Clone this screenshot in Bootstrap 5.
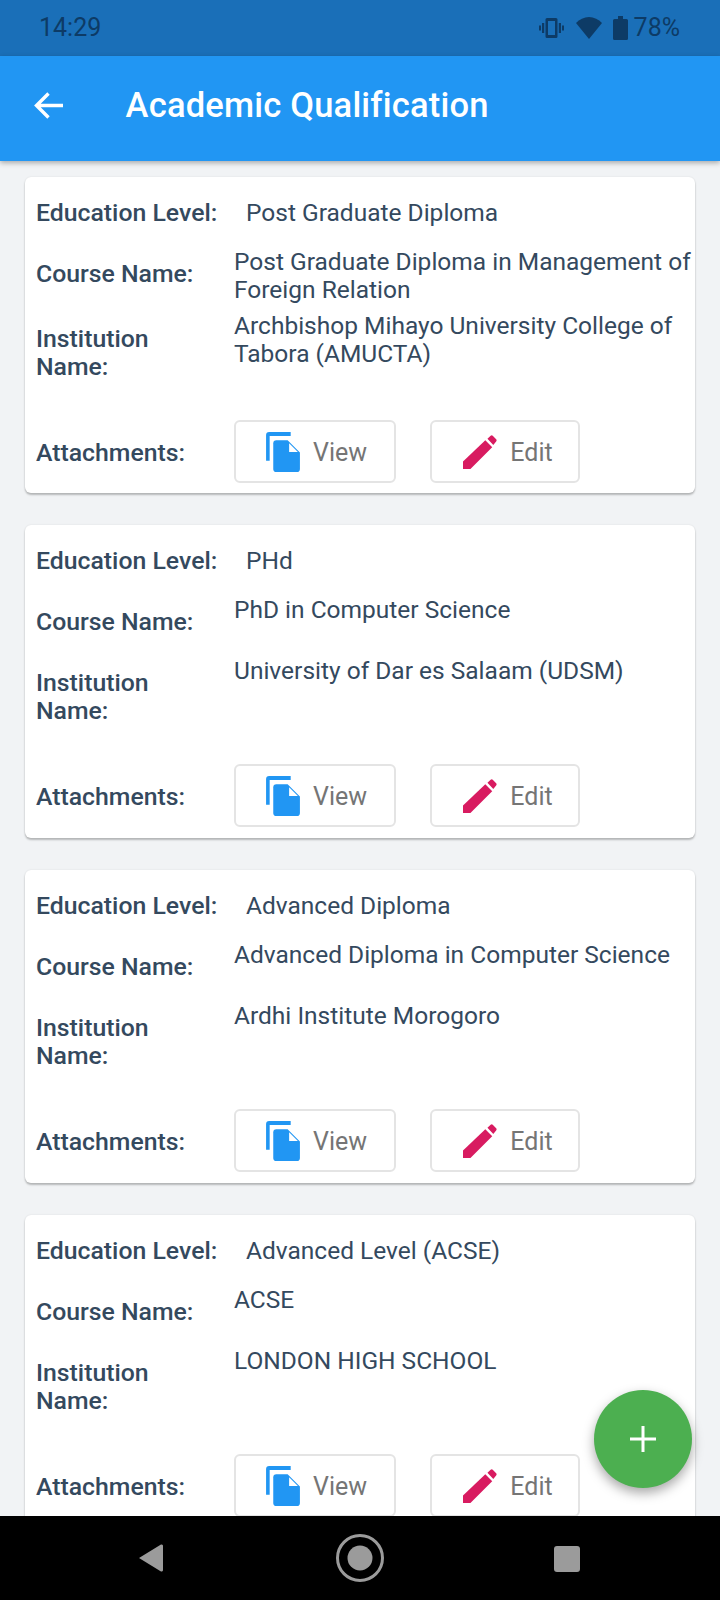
<!DOCTYPE html>
<html lang="en">
<head>
<meta charset="utf-8">
<link href="https://cdn.jsdelivr.net/npm/bootstrap@5.3.0/dist/css/bootstrap.min.css" rel="stylesheet">
<style>
html,body{margin:0;height:1600px;overflow:hidden;background:#f1f3f5;font-family:Roboto,"Liberation Sans",sans-serif;}
.shell{height:1600px;width:720px;}
.statusbar{height:56px;background:#1a6fb8;color:#0d3b66;font-size:25px;padding:0 40px 0 39px;}
.appbar{height:105px;background:#2196f3;color:#fff;box-shadow:0 2px 5px rgba(0,0,0,.3);z-index:2;padding-left:34px;padding-bottom:7px;}
.appbar h1{font-size:34.500px;font-weight:500;margin:0 0 0 62.600px;padding-top:2px;letter-spacing:.2px;}
.scroller{overflow:hidden;padding:16px 25px 0;flex:1 1 0;min-height:0;}
.qual{background:#fff;border-radius:6px;box-shadow:0 2px 2px rgba(0,0,0,.24),0 0 2px rgba(0,0,0,.1);height:316px;margin-bottom:32px;padding:0 0 0 11px;color:#34495e;font-size:24.500px;line-height:28px;}
.qual.short{height:313px;}
.lab{width:198px;padding-right:12px;flex:none;font-weight:500;font-size:24.800px;}
.val{line-height:28px;}
.r1{padding-top:22px;height:71px;}
.r1 .val{padding-left:12px;}
.r2{height:64px;}
.r2 .lab{padding-top:12px;}
.r3{height:108px;}
.r3 .lab{padding-top:13px;}
.short .r1{height:71px;}
.short .r2{height:61px;}
.short .r2 .lab{padding-top:12px;}
.short .r3{height:107px;}
.short .r3 .lab{padding-top:12px;}
.r4{align-items:center;}
.r4 .lab{padding-top:2px;}
.attbtn{height:63px;background:#fff;border:2px solid #e4e4e4;border-radius:6px;color:#757575;font-size:25px;font-weight:400;padding:0;}
.attbtn.vw{width:162px;margin-right:34px;gap:13px;padding-left:3px;}
.attbtn.ed{width:150px;gap:13px;padding-left:6px;}
.attbtn svg{flex:none;}
.btxt{padding-top:3px;}
.fab{position:absolute;left:594px;top:1390px;width:98px;height:98px;border-radius:50%;background:#4caf50;box-shadow:0 5px 12px rgba(0,0,0,.35);z-index:3;}
.navbarx{height:84px;background:#000;z-index:4;}
</style>
</head>
<body>
<div class="shell d-flex flex-column position-relative">
  <div class="statusbar d-flex align-items-center justify-content-between flex-shrink-0">
    <span>14:29</span>
    <span class="d-flex align-items-center">
      <svg width="25" height="24" viewBox="0 0 25 24" fill="#0d3b66"><path d="M8 2h9a1.500 1.500 0 0 1 1.500 1.500v17A1.500 1.500 0 0 1 17 22H8a1.500 1.500 0 0 1-1.500-1.500v-17A1.500 1.500 0 0 1 8 2zm1 3v14h7V5z"/><rect x="3" y="7" width="2.200" height="10"/><rect x="19.800" y="7" width="2.200" height="10"/><rect x="0" y="9.500" width="2" height="5"/><rect x="23" y="9.500" width="2" height="5"/></svg>
      <svg style="margin-left:12px" width="26" height="22" viewBox="0 0 26 22" fill="#0d3b66"><path d="M13 22 0 6C3.500 2.500 8 0 13 0s9.500 2.500 13 6z"/></svg>
      <svg style="margin-left:11px" width="15" height="24" viewBox="0 0 15 24" fill="#0d3b66"><path d="M5 0h5v3h3.500A1.500 1.500 0 0 1 15 4.500V22.500A1.500 1.500 0 0 1 13.500 24h-12A1.500 1.500 0 0 1 0 22.500V4.500A1.500 1.500 0 0 1 1.500 3H5z"/></svg>
      <span style="margin-left:6px">78%</span>
    </span>
  </div>
  <div class="appbar d-flex align-items-center position-relative flex-shrink-0">
    <svg width="29" height="27" viewBox="0 0 29 27" fill="none" stroke="#fff" stroke-width="3.400"><path d="M29 13.500H3M14.500 1.500 2.500 13.500l12 12"/></svg>
    <h1>Academic Qualification</h1>
  </div>
  <div class="scroller">
    <div class="qual">
      <div class="d-flex r1"><div class="lab">Education Level:</div><div class="val">Post Graduate Diploma</div></div>
      <div class="d-flex r2"><div class="lab">Course Name:</div><div class="val">Post Graduate Diploma in Management of Foreign Relation</div></div>
      <div class="d-flex r3"><div class="lab">Institution Name:</div><div class="val">Archbishop Mihayo University College of Tabora (AMUCTA)</div></div>
      <div class="d-flex r4"><div class="lab">Attachments:</div>
        <button class="btn attbtn vw d-flex align-items-center justify-content-center"><svg width="34" height="40" viewBox="0 0 33 39" fill="#2196f3"><path d="M0 28V3a3 3 0 0 1 3-3h21v4H3.500v24z"/><path d="M10 8h11l12 12v16a3 3 0 0 1-3 3H10a3 3 0 0 1-3-3V11a3 3 0 0 1 3-3z"/><path fill="#fff" d="M22.500 11v8.500H31z"/></svg><span class="btxt">View</span></button>
        <button class="btn attbtn ed d-flex align-items-center justify-content-center"><svg width="34" height="34" viewBox="0 0 32 32" fill="#d81b60"><path d="M0 32V25L21 5l6.500 6.500L7 32z"/><path d="M23 3.500 26 .8a1.500 1.500 0 0 1 2 0l3.200 3.200a1.500 1.500 0 0 1 0 2L28.500 9.500z"/></svg><span class="btxt">Edit</span></button>
      </div>
    </div>
    <div class="qual short">
      <div class="d-flex r1"><div class="lab">Education Level:</div><div class="val">PHd</div></div>
      <div class="d-flex r2"><div class="lab">Course Name:</div><div class="val">PhD in Computer Science</div></div>
      <div class="d-flex r3"><div class="lab">Institution Name:</div><div class="val">University of Dar es Salaam (UDSM)</div></div>
      <div class="d-flex r4"><div class="lab">Attachments:</div>
        <button class="btn attbtn vw d-flex align-items-center justify-content-center"><svg width="34" height="40" viewBox="0 0 33 39" fill="#2196f3"><path d="M0 28V3a3 3 0 0 1 3-3h21v4H3.500v24z"/><path d="M10 8h11l12 12v16a3 3 0 0 1-3 3H10a3 3 0 0 1-3-3V11a3 3 0 0 1 3-3z"/><path fill="#fff" d="M22.500 11v8.500H31z"/></svg><span class="btxt">View</span></button>
        <button class="btn attbtn ed d-flex align-items-center justify-content-center"><svg width="34" height="34" viewBox="0 0 32 32" fill="#d81b60"><path d="M0 32V25L21 5l6.500 6.500L7 32z"/><path d="M23 3.500 26 .8a1.500 1.500 0 0 1 2 0l3.200 3.200a1.500 1.500 0 0 1 0 2L28.500 9.500z"/></svg><span class="btxt">Edit</span></button>
      </div>
    </div>
    <div class="qual short">
      <div class="d-flex r1"><div class="lab">Education Level:</div><div class="val">Advanced Diploma</div></div>
      <div class="d-flex r2"><div class="lab">Course Name:</div><div class="val">Advanced Diploma in Computer Science</div></div>
      <div class="d-flex r3"><div class="lab">Institution Name:</div><div class="val">Ardhi Institute Morogoro</div></div>
      <div class="d-flex r4"><div class="lab">Attachments:</div>
        <button class="btn attbtn vw d-flex align-items-center justify-content-center"><svg width="34" height="40" viewBox="0 0 33 39" fill="#2196f3"><path d="M0 28V3a3 3 0 0 1 3-3h21v4H3.500v24z"/><path d="M10 8h11l12 12v16a3 3 0 0 1-3 3H10a3 3 0 0 1-3-3V11a3 3 0 0 1 3-3z"/><path fill="#fff" d="M22.500 11v8.500H31z"/></svg><span class="btxt">View</span></button>
        <button class="btn attbtn ed d-flex align-items-center justify-content-center"><svg width="34" height="34" viewBox="0 0 32 32" fill="#d81b60"><path d="M0 32V25L21 5l6.500 6.500L7 32z"/><path d="M23 3.500 26 .8a1.500 1.500 0 0 1 2 0l3.200 3.200a1.500 1.500 0 0 1 0 2L28.500 9.500z"/></svg><span class="btxt">Edit</span></button>
      </div>
    </div>
    <div class="qual short">
      <div class="d-flex r1"><div class="lab">Education Level:</div><div class="val">Advanced Level (ACSE)</div></div>
      <div class="d-flex r2"><div class="lab">Course Name:</div><div class="val">ACSE</div></div>
      <div class="d-flex r3"><div class="lab">Institution Name:</div><div class="val">LONDON HIGH SCHOOL</div></div>
      <div class="d-flex r4"><div class="lab">Attachments:</div>
        <button class="btn attbtn vw d-flex align-items-center justify-content-center"><svg width="34" height="40" viewBox="0 0 33 39" fill="#2196f3"><path d="M0 28V3a3 3 0 0 1 3-3h21v4H3.500v24z"/><path d="M10 8h11l12 12v16a3 3 0 0 1-3 3H10a3 3 0 0 1-3-3V11a3 3 0 0 1 3-3z"/><path fill="#fff" d="M22.500 11v8.500H31z"/></svg><span class="btxt">View</span></button>
        <button class="btn attbtn ed d-flex align-items-center justify-content-center"><svg width="34" height="34" viewBox="0 0 32 32" fill="#d81b60"><path d="M0 32V25L21 5l6.500 6.500L7 32z"/><path d="M23 3.500 26 .8a1.500 1.500 0 0 1 2 0l3.200 3.200a1.500 1.500 0 0 1 0 2L28.500 9.500z"/></svg><span class="btxt">Edit</span></button>
      </div>
    </div>
  </div>
  <div class="fab d-flex align-items-center justify-content-center"><svg width="26" height="26" viewBox="0 0 26 26" stroke="#fff" stroke-width="3"><path d="M13 0v26M0 13h26"/></svg></div>
  <div class="navbarx flex-shrink-0">
    <svg class="d-block" width="720" height="84" viewBox="0 0 720 84"><path d="M139 42 161 28.500a1.500 1.500 0 0 1 2 1.500V54a1.500 1.500 0 0 1-2 1.500z" fill="#9b9b9b"/><circle cx="360" cy="42" r="22.500" fill="none" stroke="#9b9b9b" stroke-width="3"/><circle cx="360" cy="42" r="12.500" fill="#9b9b9b"/><rect x="554" y="30" width="26" height="26" rx="3" fill="#9b9b9b"/></svg>
  </div>
</div>
<script src="https://cdn.jsdelivr.net/npm/bootstrap@5.3.0/dist/js/bootstrap.bundle.min.js"></script>
</body>
</html>
